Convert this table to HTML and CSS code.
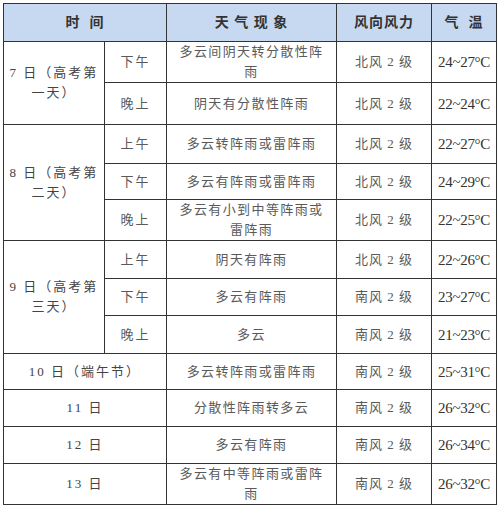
FILE: index.html
```html
<!DOCTYPE html>
<html lang="zh">
<head>
<meta charset="utf-8">
<title>天气预报</title>
<link rel="stylesheet" href="styles.css">
</head>
<body>
<table class="wx">
  <colgroup>
    <col class="c-day"><col class="c-part"><col class="c-desc"><col class="c-wind"><col class="c-temp">
  </colgroup>
  <thead>
    <tr class="h38">
      <th colspan="2">时&nbsp;&nbsp;间</th>
      <th>天&nbsp;气&nbsp;现&nbsp;象</th>
      <th>风向风力</th>
      <th>气&nbsp;&nbsp;温</th>
    </tr>
  </thead>
  <tbody>
    <tr class="h41">
      <td rowspan="2" class="day">7 日（高考第一天）</td>
      <td class="part">下午</td>
      <td class="desc">多云间阴天转分散性阵雨</td>
      <td class="wind">北风 2 级</td>
      <td class="temp">24~27°C</td>
    </tr>
    <tr class="h42">
      <td class="part">晚上</td>
      <td class="desc">阴天有分散性阵雨</td>
      <td class="wind">北风 2 级</td>
      <td class="temp">22~24°C</td>
    </tr>
    <tr class="h39">
      <td rowspan="3" class="day">8 日（高考第二天）</td>
      <td class="part">上午</td>
      <td class="desc">多云转阵雨或雷阵雨</td>
      <td class="wind">北风 2 级</td>
      <td class="temp">22~27°C</td>
    </tr>
    <tr class="h36">
      <td class="part">下午</td>
      <td class="desc">多云有阵雨或雷阵雨</td>
      <td class="wind">北风 2 级</td>
      <td class="temp">24~29°C</td>
    </tr>
    <tr class="h40">
      <td class="part">晚上</td>
      <td class="desc">多云有小到中等阵雨或雷阵雨</td>
      <td class="wind">北风 2 级</td>
      <td class="temp">22~25°C</td>
    </tr>
    <tr class="h38">
      <td rowspan="3" class="day">9 日（高考第三天）</td>
      <td class="part">上午</td>
      <td class="desc">阴天有阵雨</td>
      <td class="wind">北风 2 级</td>
      <td class="temp">22~26°C</td>
    </tr>
    <tr class="h37">
      <td class="part">下午</td>
      <td class="desc">多云有阵雨</td>
      <td class="wind">南风 2 级</td>
      <td class="temp">23~27°C</td>
    </tr>
    <tr class="h38">
      <td class="part">晚上</td>
      <td class="desc">多云</td>
      <td class="wind">南风 2 级</td>
      <td class="temp">21~23°C</td>
    </tr>
    <tr class="h36">
      <td colspan="2" class="day">10 日（端午节）</td>
      <td class="desc">多云转阵雨或雷阵雨</td>
      <td class="wind">南风 2 级</td>
      <td class="temp">25~31°C</td>
    </tr>
    <tr class="h37">
      <td colspan="2" class="day">11 日</td>
      <td class="desc">分散性阵雨转多云</td>
      <td class="wind">南风 2 级</td>
      <td class="temp">26~32°C</td>
    </tr>
    <tr class="h37">
      <td colspan="2" class="day">12 日</td>
      <td class="desc">多云有阵雨</td>
      <td class="wind">南风 2 级</td>
      <td class="temp">26~34°C</td>
    </tr>
    <tr class="h40">
      <td colspan="2" class="day">13 日</td>
      <td class="desc">多云有中等阵雨或雷阵雨</td>
      <td class="wind">南风 2 级</td>
      <td class="temp">26~32°C</td>
    </tr>
  </tbody>
</table>
</body>
</html>
```

FILE: styles.css
```css
html, body {
  margin: 0;
  padding: 0;
  background: #ffffff;
}
body {
  padding: 3px 0 0 3px;
  font-family: "Liberation Serif", "Noto Sans CJK SC", serif;
  color: #5a5a5a;
}
.wx {
  border-collapse: collapse;
  table-layout: fixed;
  width: 493px;
  border: 1.5px solid #333333;
}
.c-day { width: 101px; }
.c-part { width: 62px; }
.c-desc { width: 170px; }
.c-wind { width: 95px; }
.c-temp { width: 65px; }

.wx th, .wx td {
  border: 1px solid #333333;
  text-align: center;
  vertical-align: middle;
  padding: 0;
  line-height: 20px;
}
.wx th {
  background: #c6d9f0;
  font-size: 14px;
  font-weight: bold;
  color: #333333;
  letter-spacing: 1px;
}
.wx td {
  font-size: 13px;
}
.wx td.day {
  padding: 0;
  letter-spacing: 2px;
  color: #444444;
}
.wx td.part {
  letter-spacing: 2px;
}
.wx td.desc {
  padding: 0 12px;
  letter-spacing: 1.4px;
}
.wx td.wind {
  letter-spacing: 1px;
}
.wx td.temp {
  font-size: 15px;
  color: #333333;
  letter-spacing: -0.3px;
}
.h36 { height: 36px; }
.h37 { height: 37px; }
.h38 { height: 38px; }
.h39 { height: 39px; }
.h40 { height: 40px; }
.h41 { height: 41px; }
.h42 { height: 42px; }
```
